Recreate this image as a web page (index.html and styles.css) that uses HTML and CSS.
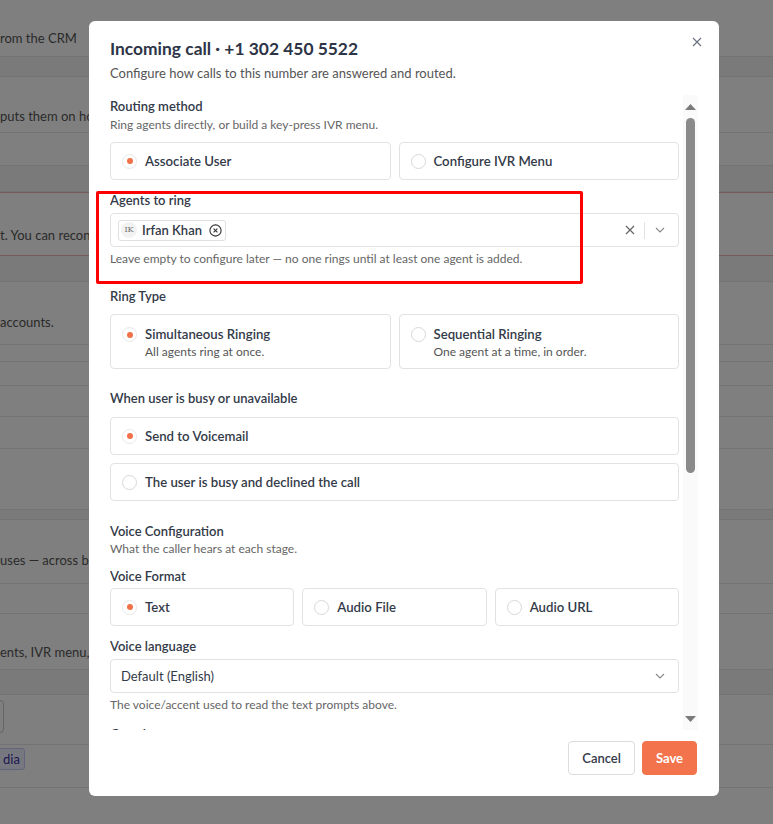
FILE: index.html
```html
<!DOCTYPE html>
<html>
<head>
  <meta charset="UTF-8">
  <title>Incoming call</title>
  <link rel="stylesheet" href="styles.css">
</head>
<body>
  <!-- page behind the dialog -->
  <div class="bg-page">
    <div class="bg-row bg-h57"><span class="bg-text bg-t29">rom the CRM</span></div>
    <div class="bg-band bg-h20"></div>
    <div class="bg-row bg-h56"><span class="bg-text bg-t30">puts them on hold while agents are busy</span></div>
    <div class="bg-row bg-h33"></div>
    <div class="bg-band bg-h26"></div>
    <div class="bg-row bg-alert"><span class="bg-text bg-t33">t. You can reconnect it at any time</span></div>
    <div class="bg-band bg-h26"></div>
    <div class="bg-row bg-h63"><span class="bg-text bg-t31">accounts.</span></div>
    <div class="bg-row bg-h17"></div>
    <div class="bg-row bg-h24"></div>
    <div class="bg-row bg-h31"></div>
    <div class="bg-row bg-h32"></div>
    <div class="bg-row bg-h61"></div>
    <div class="bg-band bg-h10"></div>
    <div class="bg-row bg-h64"><span class="bg-text bg-t31">uses — across both accounts</span></div>
    <div class="bg-row bg-h30"></div>
    <div class="bg-row bg-h56"><span class="bg-text bg-t29">ents, IVR menu, voicemail</span></div>
    <div class="bg-band bg-h25"></div>
    <div class="bg-row bg-h45"><span class="bg-btn"></span></div>
    <div class="bg-row bg-h43"><span class="bg-tag">dia</span></div>
  </div>

  <div class="overlay">
    <div class="modal">
      <button class="close" aria-label="Close">
        <svg width="10" height="10" viewBox="0 0 10 10"><path d="M1 1L9 9M9 1L1 9" stroke="#6b7280" stroke-width="1.2" fill="none"/></svg>
      </button>
      <div class="modal-head">
        <h2 class="title">Incoming call · +1 302 450 5522</h2>
        <p class="subtitle">Configure how calls to this number are answered and routed.</p>
      </div>

      <div class="modal-body">
        <div class="scroll-view">
          <div class="section">
            <div class="label">Routing method</div>
            <div class="desc">Ring agents directly, or build a key-press IVR menu.</div>
            <div class="options two">
              <label class="option"><span class="radio checked"></span><span class="opt-title">Associate User</span></label>
              <label class="option"><span class="radio"></span><span class="opt-title">Configure IVR Menu</span></label>
            </div>
          </div>

          <div class="field">
            <div class="label">Agents to ring</div>
            <div class="select multi">
              <span class="chip">
                <span class="avatar">IK</span>
                <span class="chip-name">Irfan Khan</span>
                <svg class="chip-x" width="13" height="13" viewBox="0 0 13 13"><circle cx="6.5" cy="6.5" r="5.6" stroke="#333" stroke-width="1.1" fill="none"/><path d="M4.6 4.6L8.4 8.4M8.4 4.6L4.6 8.4" stroke="#333" stroke-width="1.1"/></svg>
              </span>
              <span class="select-tools">
                <svg width="10" height="10" viewBox="0 0 10 10"><path d="M1 1L9 9M9 1L1 9" stroke="#666" stroke-width="1.2" fill="none"/></svg>
                <span class="sep"></span>
                <svg width="10" height="6" viewBox="0 0 10 6"><path d="M1 1L5 5L9 1" stroke="#888" stroke-width="1.1" fill="none"/></svg>
              </span>
            </div>
            <div class="help">Leave empty to configure later — no one rings until at least one agent is added.</div>
          </div>

          <div class="section gap-19">
            <div class="label">Ring Type</div>
            <div class="options two tall">
              <label class="option top"><span class="radio checked"></span><span><span class="opt-title">Simultaneous Ringing</span><span class="opt-sub">All agents ring at once.</span></span></label>
              <label class="option top"><span class="radio"></span><span><span class="opt-title">Sequential Ringing</span><span class="opt-sub">One agent at a time, in order.</span></span></label>
            </div>
          </div>

          <div class="section gap-20">
            <div class="label">When user is busy or unavailable</div>
            <div class="options stack">
              <label class="option"><span class="radio checked"></span><span class="opt-title">Send to Voicemail</span></label>
              <label class="option"><span class="radio"></span><span class="opt-title">The user is busy and declined the call</span></label>
            </div>
          </div>

          <div class="section gap-21">
            <div class="label">Voice Configuration</div>
            <div class="desc tight">What the caller hears at each stage.</div>
            <div class="label sub">Voice Format</div>
            <div class="options three">
              <label class="option"><span class="radio checked"></span><span class="opt-title">Text</span></label>
              <label class="option"><span class="radio"></span><span class="opt-title">Audio File</span></label>
              <label class="option"><span class="radio"></span><span class="opt-title">Audio URL</span></label>
            </div>
          </div>

          <div class="field">
            <div class="label">Voice language</div>
            <div class="select">
              <span class="select-value">Default (English)</span>
              <svg width="10" height="6" viewBox="0 0 10 6"><path d="M1 1L5 5L9 1" stroke="#888" stroke-width="1.1" fill="none"/></svg>
            </div>
            <div class="help">The voice/accent used to read the text prompts above.</div>
          </div>

          <div class="field">
            <div class="label">Greeting message</div>
            <div class="textarea">Thanks for calling. Please hold while we connect you.</div>
            <div class="help">Played before the agents start ringing.</div>
          </div>
        </div>

        <div class="scrollbar">
          <span class="sb-btn">
            <svg width="11" height="6" viewBox="0 0 11 6"><path d="M0 6L5.5 0L11 6Z" fill="#7a7a7a"/></svg>
          </span>
          <span class="sb-track"><span class="sb-thumb"></span></span>
          <span class="sb-btn">
            <svg width="11" height="6" viewBox="0 0 11 6"><path d="M0 0L5.5 6L11 0Z" fill="#7a7a7a"/></svg>
          </span>
        </div>
      </div>

      <div class="modal-foot">
        <button class="btn">Cancel</button>
        <button class="btn primary">Save</button>
      </div>
    </div>
    <div class="highlight"></div>
  </div>
</body>
</html>
```

FILE: styles.css
```css
* {
  box-sizing: border-box;
}

body {
  margin: 0;
  font-family: Lato, "Noto Sans", sans-serif;
  color: #2f3644;
  background: #fff;
  height: 824px;
  overflow: hidden;
}

/* background page */
.bg-page {
  width: 773px;
}
.bg-row {
  border-bottom: 1px solid #e6e6e6;
  position: relative;
}
.bg-band {
  background: #f4f4f4;
  border-bottom: 1px solid #e6e6e6;
}
.bg-text {
  display: block;
  font-size: 13px;
  color: #555;
  line-height: 18px;
  white-space: nowrap;
}
.bg-h10 { height: 10px; }
.bg-h17 { height: 17px; }
.bg-h20 { height: 20px; }
.bg-h24 { height: 24px; }
.bg-h25 { height: 25px; }
.bg-h26 { height: 26px; }
.bg-h30 { height: 30px; }
.bg-h31 { height: 31px; }
.bg-h32 { height: 32px; }
.bg-h33 { height: 33px; }
.bg-h43 { height: 43px; }
.bg-h45 { height: 45px; }
.bg-h56 { height: 56px; }
.bg-h57 { height: 57px; }
.bg-h61 { height: 61px; }
.bg-h63 { height: 63px; }
.bg-h64 { height: 64px; }
.bg-t29 { padding-top: 29px; }
.bg-t30 { padding-top: 30px; }
.bg-t31 { padding-top: 31px; }
.bg-t33 { padding-top: 33px; }
.bg-alert {
  height: 64px;
  border-top: 1px solid #f0b4b4;
  border-bottom: 1px solid #f0b4b4;
}
.bg-btn {
  display: block;
  margin: 5px 0 0 -60px;
  width: 64px;
  height: 33px;
  border: 1px solid #ccc;
  border-radius: 4px;
}
.bg-tag {
  display: inline-block;
  margin: 3px 0 0 -4px;
  padding: 0 4px 0 6px;
  height: 22px;
  line-height: 20px;
  font-size: 13px;
  color: #3730a3;
  background: #eef0ff;
  border: 1px solid #c7cbf5;
  border-radius: 3px;
}

/* dialog */
.overlay {
  position: fixed;
  inset: 0;
  background: rgba(0, 0, 0, 0.5);
}
.modal {
  position: relative;
  margin: 21px 0 0 89px;
  width: 630px;
  height: 775px;
  background: #fff;
  border-radius: 6px;
  padding: 16px 21px 21px;
  display: flex;
  flex-direction: column;
}
.close {
  position: absolute;
  top: 16px;
  right: 17px;
  border: 0;
  background: none;
  padding: 0;
  line-height: 0;
}
.modal-head {
  margin-bottom: 13px;
}
.title {
  margin: 0;
  font-size: 17.4px;
  line-height: 24px;
  font-weight: 700;
  color: #2d3446;
}
.subtitle {
  margin: 3px 0 0;
  font-size: 13px;
  line-height: 18px;
  color: #555;
}

.modal-body {
  flex: 1;
  min-height: 0;
  display: flex;
  gap: 4px;
}
.scroll-view {
  flex: 1;
  overflow: hidden;
  padding-top: 2px;
}

/* scrollbar of the dialog body */
.scrollbar {
  flex: none;
  width: 15px;
  background: #fafafa;
  display: flex;
  flex-direction: column;
}
.sb-btn {
  height: 18px;
  display: flex;
  align-items: center;
  justify-content: center;
}
.sb-btn:first-child {
  padding-top: 5px;
}
.sb-btn:last-child {
  padding-bottom: 5px;
}
.sb-track {
  flex: 1;
  padding: 5px 3px 0;
}
.sb-thumb {
  display: block;
  width: 9px;
  height: 355px;
  background: #8a8a8a;
  border-radius: 5px;
}

.label {
  font-size: 13px;
  line-height: 18px;
  font-weight: 600;
  color: #333a48;
}
.label.sub {
  margin-top: 9px;
}
.desc {
  font-size: 12px;
  line-height: 18px;
  color: #666;
  margin: 1px 0 8px;
}
.desc.tight {
  margin: 0;
}

.section.gap-19 {
  margin-top: 19px;
}
.section.gap-20 {
  margin-top: 20px;
}
.section.gap-21 {
  margin-top: 21px;
}
.field {
  margin-top: 11px;
}

.options {
  display: grid;
  gap: 8px;
}
.options.two {
  grid-template-columns: 1fr 1fr;
}
.options.three {
  grid-template-columns: 1fr 1fr 1fr;
  margin-top: 3px;
}
.options.stack {
  margin-top: 10px;
}
.options.tall {
  margin-top: 9px;
}
.option {
  display: flex;
  align-items: center;
  gap: 8px;
  height: 38px;
  padding: 0 11px;
  border: 1px solid #e2e2e2;
  border-radius: 4px;
}
.option.top {
  align-items: flex-start;
  height: 55px;
  padding-top: 10px;
}
.radio {
  flex: none;
  width: 15px;
  height: 15px;
  border: 1px solid #d8d8d8;
  border-radius: 50%;
  position: relative;
}
.option.top .radio {
  margin-top: 2px;
}
.radio.checked {
  border-color: #e8e8e8;
}
.radio.checked::after {
  content: "";
  position: absolute;
  left: 3.5px;
  top: 3.5px;
  width: 6px;
  height: 6px;
  border-radius: 50%;
  background: #f0704a;
}
.opt-title {
  display: block;
  font-size: 13.2px;
  line-height: 18px;
  font-weight: 600;
  color: #333a48;
}
.opt-sub {
  display: block;
  font-size: 12px;
  line-height: 17px;
  color: #555;
}

.select {
  margin-top: 4px;
  height: 34px;
  border: 1px solid #e2e2e2;
  border-radius: 4px;
  display: flex;
  align-items: center;
  justify-content: space-between;
  padding: 0 13px 0 10px;
}
.select.multi {
  padding: 0 13px 0 7px;
}
.select-value {
  font-size: 13px;
  color: #333a48;
}
.chip {
  display: flex;
  align-items: center;
  height: 21px;
  padding: 0 3px 0 2px;
  border: 1px solid #e0e0e0;
  border-radius: 3px;
}
.avatar {
  width: 16px;
  height: 16px;
  border-radius: 50%;
  background: #f2f2f2;
  font-family: "DejaVu Serif", serif;
  font-size: 8px;
  line-height: 16px;
  text-align: center;
  color: #777;
}
.chip-name {
  margin-left: 5px;
  font-size: 13px;
  font-weight: 600;
  color: #333a48;
}
.chip-x {
  margin-left: 7px;
}
.select-tools {
  display: flex;
  align-items: center;
  gap: 9px;
}
.sep {
  width: 1px;
  height: 17px;
  background: #e2e2e2;
  margin-right: 1px;
}

.textarea {
  margin-top: 4px;
  height: 80px;
  border: 1px solid #e2e2e2;
  border-radius: 4px;
  padding: 8px 10px;
  font-size: 13px;
  color: #333a48;
}

.help {
  margin-top: 3px;
  font-size: 12px;
  line-height: 18px;
  color: #666;
}

.modal-foot {
  margin-top: 11px;
  display: flex;
  justify-content: flex-end;
  gap: 7px;
  padding-right: 1px;
}
.btn {
  height: 34px;
  padding: 0 13px;
  font-family: Lato, "Noto Sans", sans-serif;
  font-size: 13px;
  font-weight: 600;
  color: #333a48;
  background: #fff;
  border: 1px solid #dcdcdc;
  border-radius: 4px;
}
.btn.primary {
  background: #f2734c;
  border-color: #f2734c;
  color: #fff;
  font-weight: 700;
}

/* annotation box drawn over the screenshot */
.highlight {
  position: absolute;
  left: 96px;
  top: 191px;
  width: 487px;
  height: 93px;
  border: 3px solid #ff0000;
  border-radius: 2px;
}
```
